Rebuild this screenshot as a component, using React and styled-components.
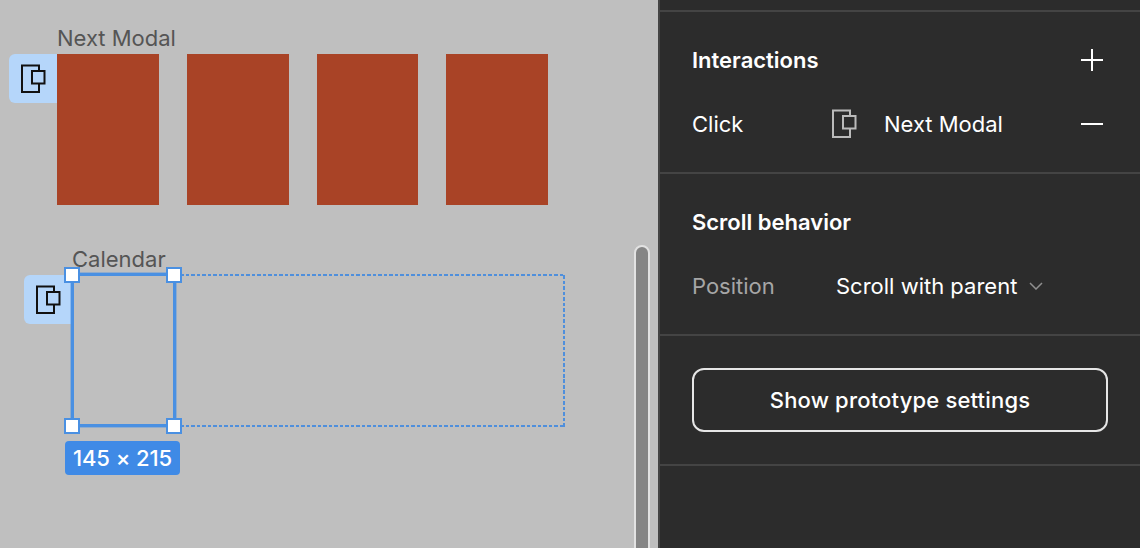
import React from "react";
import styled, { createGlobalStyle } from "styled-components";

const Global = createGlobalStyle`
  html, body {
    margin: 0;
    padding: 0;
    background: #2c2c2c;
  }
  * {
    box-sizing: border-box;
  }
`;

const Page = styled.div`
  width: 1140px;
  height: 548px;
  display: flex;
  overflow: hidden;
  font-family: Inter, "Liberation Sans", sans-serif;
  font-size: 22px;
`;

const Canvas = styled.div`
  position: relative;
  width: 658px;
  flex: none;
  background: #bfbfbf;
`;

const FrameLabel = styled.div`
  position: absolute;
  left: ${(p) => p.$x}px;
  top: ${(p) => p.$y}px;
  color: #555555;
  line-height: 26px;
  white-space: nowrap;
`;

const FrameRow = styled.div`
  position: absolute;
  left: 57px;
  top: 54px;
  display: flex;
  gap: 28px;
`;

const RedFrame = styled.div`
  width: 101.8px;
  height: 151px;
  background: #a94326;
`;

const ComponentTag = styled.div`
  position: absolute;
  left: ${(p) => p.$x}px;
  top: ${(p) => p.$y}px;
  width: 48px;
  height: 49px;
  display: flex;
  align-items: center;
  justify-content: center;
  padding-left: 1px;
  background: #b5d6fa;
  border-radius: 6px 0 0 6px;
  color: #111111;
`;

const dash = "#4f8fdc 0 3.5px, transparent 3.5px 5.5px";

const DottedBounds = styled.div`
  position: absolute;
  left: 175px;
  top: 274px;
  width: 390px;
  height: 153px;
  background:
    repeating-linear-gradient(90deg, ${dash}) top / 100% 2px no-repeat,
    repeating-linear-gradient(90deg, ${dash}) bottom / 100% 2px no-repeat,
    repeating-linear-gradient(0deg, ${dash}) right / 2px 100% no-repeat;
`;

const Selection = styled.div`
  position: absolute;
  left: 71px;
  top: 273px;
  width: 105px;
  height: 154px;
  border: 3px solid #4a90e2;
  box-shadow: 0 0 0 0.4px #4a90e2;
`;

const Handle = styled.div`
  position: absolute;
  left: ${(p) => (p.$right ? 92 : -10)}px;
  top: ${(p) => (p.$bottom ? 142 : -9)}px;
  width: 16px;
  height: 16px;
  background: #ffffff;
  border: 2px solid #4a90e2;
`;

const SizeTag = styled.div`
  position: absolute;
  left: 65px;
  top: 441px;
  width: 115px;
  height: 34px;
  display: flex;
  align-items: center;
  justify-content: center;
  background: #3f8ae6;
  border-radius: 4px;
  color: #ffffff;
  font-weight: 500;
  letter-spacing: -0.1px;
`;

const ScrollTrack = styled.div`
  position: absolute;
  left: 634px;
  top: 245px;
  width: 16px;
  height: 320px;
  background: #858585;
  border: 2px solid #e2e2e2;
  border-radius: 8px;
`;

const Panel = styled.div`
  flex: 1;
  display: flex;
  flex-direction: column;
  padding-top: 10px;
  background: #2c2c2c;
  border-left: 2px solid #444444;
  color: #ffffff;
`;

const Section = styled.section`
  height: ${(p) => p.$height}px;
  padding: ${(p) => p.$pad ?? 30}px 32px 0;
  border-top: 2px solid #444444;
  flex: none;
`;

const Heading = styled.div`
  height: 36px;
  display: flex;
  align-items: center;
  justify-content: space-between;
  padding-right: 5px;
  font-weight: 600;
`;

const Row = styled.div`
  height: 36px;
  margin-top: 28px;
  display: flex;
  align-items: center;
  padding-right: 5px;
`;

const RowLabel = styled.span`
  width: ${(p) => p.$width}px;
  flex: none;
  color: ${(p) => (p.$muted ? "#a6a6a6" : "#ffffff")};
`;

const RowIcon = styled.span`
  width: 52px;
  flex: none;
  display: flex;
  color: #bbbbbb;
`;

const Spacer = styled.span`
  flex: 1;
`;

const Chevron = styled.svg`
  margin-left: 12px;
  color: #8f8f8f;
`;

const OutlineButton = styled.button`
  width: 416px;
  height: 64px;
  background: transparent;
  border: 2px solid #e6e6e6;
  border-radius: 12px;
  color: #ffffff;
  font: 500 22px Inter, "Liberation Sans", sans-serif;
  letter-spacing: 0.18px;
`;

function ComponentIcon() {
  return (
    <svg width="26" height="30" viewBox="0 0 26 30" fill="none" stroke="currentColor" strokeWidth="2">
      <path d="M18 7V1.5H1V28H18V20" />
      <rect x="11" y="7" width="12.5" height="12.5" />
    </svg>
  );
}

function PlusIcon() {
  return (
    <svg width="22" height="22" viewBox="0 0 22 22" stroke="#fff" strokeWidth="2">
      <path d="M0 11H22M11 0V22" />
    </svg>
  );
}

function MinusIcon() {
  return (
    <svg width="22" height="22" viewBox="0 0 22 22" stroke="#fff" strokeWidth="2">
      <path d="M0 11H22" />
    </svg>
  );
}

export default function App() {
  return (
    <Page>
      <Global />
      <Canvas>
        <FrameLabel $x={57} $y={25}>Next Modal</FrameLabel>
        <FrameRow>
          <RedFrame />
          <RedFrame />
          <RedFrame />
          <RedFrame />
        </FrameRow>
        <ComponentTag $x={9} $y={54}>
          <ComponentIcon />
        </ComponentTag>

        <FrameLabel $x={72} $y={246}>Calendar</FrameLabel>
        <ComponentTag $x={24} $y={275}>
          <ComponentIcon />
        </ComponentTag>
        <DottedBounds />
        <Selection>
          <Handle />
          <Handle $right />
          <Handle $bottom />
          <Handle $right $bottom />
        </Selection>
        <SizeTag>145 × 215</SizeTag>
        <ScrollTrack />
      </Canvas>

      <Panel>
        <Section $height={162}>
          <Heading>
            Interactions
            <PlusIcon />
          </Heading>
          <Row>
            <RowLabel $width={140}>Click</RowLabel>
            <RowIcon>
              <ComponentIcon />
            </RowIcon>
            Next Modal
            <Spacer />
            <MinusIcon />
          </Row>
        </Section>
        <Section $height={162}>
          <Heading>Scroll behavior</Heading>
          <Row>
            <RowLabel $width={144} $muted>Position</RowLabel>
            Scroll with parent
            <Chevron width="14" height="8" viewBox="0 0 14 8" fill="none" stroke="currentColor" strokeWidth="1.5">
              <path d="M1 1L7 7L13 1" />
            </Chevron>
          </Row>
        </Section>
        <Section $height={130} $pad={32}>
          <OutlineButton>Show prototype settings</OutlineButton>
        </Section>
        <Section $height={84} />
      </Panel>
    </Page>
  );
}
